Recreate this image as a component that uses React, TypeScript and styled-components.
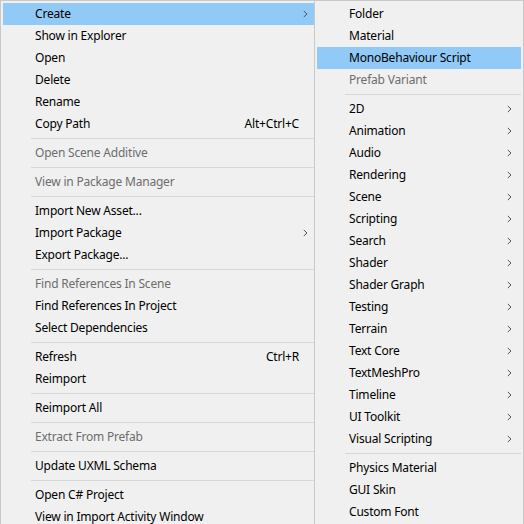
import React from 'react';
import styled, { createGlobalStyle } from 'styled-components';

const GlobalStyle = createGlobalStyle`
  html, body {
    margin: 0;
    padding: 0;
    background: #f0f0f0;
    overflow: hidden;
  }
  body {
    font-family: "Noto Sans", "Open Sans", sans-serif;
  }
`;

type Entry =
  | 'sep'
  | {
      label: string;
      shortcut?: string;
      sub?: boolean;
      disabled?: boolean;
      active?: boolean;
    };

const mainItems: Entry[] = [
  { label: 'Create', sub: true, active: true },
  { label: 'Show in Explorer' },
  { label: 'Open' },
  { label: 'Delete' },
  { label: 'Rename' },
  { label: 'Copy Path', shortcut: 'Alt+Ctrl+C' },
  'sep',
  { label: 'Open Scene Additive', disabled: true },
  'sep',
  { label: 'View in Package Manager', disabled: true },
  'sep',
  { label: 'Import New Asset...' },
  { label: 'Import Package', sub: true },
  { label: 'Export Package...' },
  'sep',
  { label: 'Find References In Scene', disabled: true },
  { label: 'Find References In Project' },
  { label: 'Select Dependencies' },
  'sep',
  { label: 'Refresh', shortcut: 'Ctrl+R' },
  { label: 'Reimport' },
  'sep',
  { label: 'Reimport All' },
  'sep',
  { label: 'Extract From Prefab', disabled: true },
  'sep',
  { label: 'Update UXML Schema' },
  'sep',
  { label: 'Open C# Project' },
  { label: 'View in Import Activity Window' },
];

const createItems: Entry[] = [
  { label: 'Folder' },
  { label: 'Material' },
  { label: 'MonoBehaviour Script', active: true },
  { label: 'Prefab Variant', disabled: true },
  'sep',
  { label: '2D', sub: true },
  { label: 'Animation', sub: true },
  { label: 'Audio', sub: true },
  { label: 'Rendering', sub: true },
  { label: 'Scene', sub: true },
  { label: 'Scripting', sub: true },
  { label: 'Search', sub: true },
  { label: 'Shader', sub: true },
  { label: 'Shader Graph', sub: true },
  { label: 'Testing', sub: true },
  { label: 'Terrain', sub: true },
  { label: 'Text Core', sub: true },
  { label: 'TextMeshPro', sub: true },
  { label: 'Timeline', sub: true },
  { label: 'UI Toolkit', sub: true },
  { label: 'Visual Scripting', sub: true },
  'sep',
  { label: 'Physics Material' },
  { label: 'GUI Skin' },
  { label: 'Custom Font' },
];

const Page = styled.div`
  display: flex;
  align-items: flex-start;
  width: 524px;
  height: 524px;
  overflow: hidden;
`;

const Menu = styled.div<{ $width: number; $sub?: boolean }>`
  flex: none;
  position: relative;
  z-index: ${({ $sub }) => ($sub ? 1 : 0)};
  width: ${({ $width }) => $width}px;
  margin-left: ${({ $sub }) => ($sub ? '-6px' : '0')};
  padding: 2px;
  border: 1px solid #c9c9c9;
  border-bottom: none;
  background: #f0f0f0;
  display: flex;
  flex-direction: column;
`;

const Item = styled.div<{ $active?: boolean; $disabled?: boolean }>`
  box-sizing: border-box;
  height: 22px;
  display: flex;
  align-items: center;
  padding: 0 9px 2px 32px;
  font-size: 12px;
  letter-spacing: -0.2px;
  white-space: nowrap;
  color: ${({ $disabled }) => ($disabled ? '#6d6d6d' : '#000')};
  background: ${({ $active }) => ($active ? '#91c9f7' : 'transparent')};
`;

const Label = styled.span`
  flex: 1;
`;

const Shortcut = styled.span`
  margin-right: 4px;
`;

const ArrowBox = styled.span`
  width: 5px;
  display: flex;
  justify-content: flex-end;
  padding-top: 2px;
`;

const Separator = styled.div`
  height: 1px;
  margin: 3px 0 3px 28px;
  background: #d7d7d7;
`;

function Chevron() {
  return (
    <svg width="5" height="8" viewBox="0 0 5 8">
      <path d="M0.8 1 L4 4 L0.8 7" fill="none" stroke="#555" strokeWidth="1" />
    </svg>
  );
}

function MenuList({ items, width, sub }: { items: Entry[]; width: number; sub?: boolean }) {
  return (
    <Menu $width={width} $sub={sub}>
      {items.map((it, i) =>
        it === 'sep' ? (
          <Separator key={i} />
        ) : (
          <Item key={i} $active={it.active} $disabled={it.disabled}>
            <Label>{it.label}</Label>
            {it.shortcut && <Shortcut>{it.shortcut}</Shortcut>}
            <ArrowBox>{it.sub && <Chevron />}</ArrowBox>
          </Item>
        )
      )}
    </Menu>
  );
}

export default function App() {
  return (
    <>
      <GlobalStyle />
      <Page>
        <MenuList items={mainItems} width={314} />
        <MenuList items={createItems} width={204} sub />
      </Page>
    </>
  );
}
